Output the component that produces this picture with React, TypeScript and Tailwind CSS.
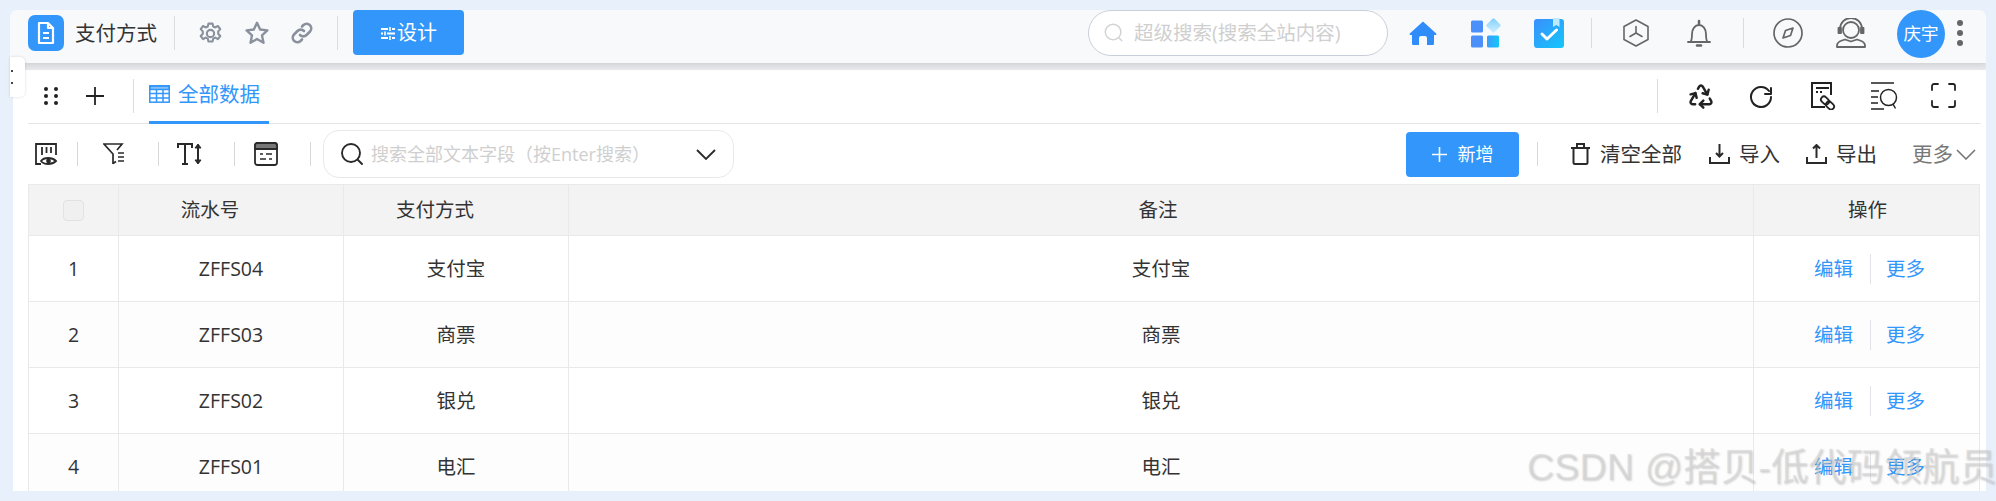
import React from "react";
import { Recycle } from "lucide-react";

const font = { fontFamily: '"Open Sans","Noto Sans CJK SC",sans-serif' };

type P = { size?: number; className?: string; children?: React.ReactNode; sw?: number; vb?: number };
function Ic({ size = 24, className = "", children, sw = 2, vb = 24 }: P) {
  return (
    <svg width={size} height={size} viewBox={`0 0 ${vb} ${vb}`} fill="none" stroke="currentColor" strokeWidth={sw} strokeLinecap="round" strokeLinejoin="round" className={`shrink-0 ${className}`}>
      {children}
    </svg>
  );
}

const VDiv = ({ h = "h-[34px]", c = "bg-[#dcdcdc]" }: { h?: string; c?: string }) => <div className={`w-px shrink-0 ${h} ${c}`} />;

function TopBar() {
  return (
    <div className="h-[53px] bg-[#f8f9fb] rounded-tl-[6px] rounded-tr-[6px] shadow-[0_2px_6px_rgba(0,0,0,0.12)] relative z-10 flex items-center">
      <div className="ml-[18px] w-9 h-9 rounded-[7px] bg-[#3296fa] flex items-center justify-center text-white -mt-[7px]">
        <svg width="20" height="24" viewBox="0 0 20 24" fill="none" stroke="currentColor" strokeWidth="2.2" strokeLinejoin="round">
          <path d="M3 2h9l5 5v15H3z" />
          <path d="M7 12h6M7 17h6" />
          <path d="M12 2v5h5" />
        </svg>
      </div>
      <div className="ml-[11px] w-[84px] text-[20.5px] text-[#333] -mt-[7px] whitespace-nowrap">支付方式</div>
      <div className="ml-[15px] -mt-[7px]"><VDiv /></div>
      <div className="ml-[23px] -mt-[7px] text-[#8a919c]">
        <Ic size={25} sw={2}>
          <path d="M10 2.5h4l.6 2.8 2 .9 2.5-1.4 2.3 3-2 2.2v2.2l2 2.2-2.3 3-2.5-1.4-2 .9-.6 2.8h-4l-.6-2.8-2-.9-2.5 1.4-2.3-3 2-2.2v-2.2l-2-2.2 2.3-3 2.5 1.4 2-.9z" />
          <circle cx="12" cy="12" r="3.5" />
        </Ic>
      </div>
      <div className="ml-[21px] -mt-[7px] text-[#8a919c]">
        <Ic size={26} sw={2.2}>
          <path d="M12 2.5l2.9 6.3 6.7.8-5 4.6 1.4 6.8-6-3.4-6 3.4 1.4-6.8-5-4.6 6.7-.8z" />
        </Ic>
      </div>
      <div className="ml-[20px] -mt-[7px] text-[#8a919c]">
        <Ic size={24} sw={2.6}>
          <path d="M10 14a4.5 4.5 0 0 0 6.5 0l3.5-3.5a4.6 4.6 0 0 0-6.5-6.5l-1.5 1.5" />
          <path d="M14 10a4.5 4.5 0 0 0-6.5 0L4 13.500a4.600 4.600 0 0 0 6.500 6.500l1.500-1.500" />
        </Ic>
      </div>
      <div className="ml-[23px] -mt-[7px]"><VDiv /></div>
      <div className="ml-[15px] w-[111px] h-[45px] -mt-[8px] rounded-[4px] bg-[#3296fa] text-white flex items-center justify-center">
        <svg width="16" height="14" viewBox="0 0 16 14" stroke="currentColor" strokeWidth="1.8" fill="none" className="mr-px">
          <path d="M1 3h7M12 3h3M1 7.500h2M7 7.500h8M1 12h7M12 12h3" />
          <path d="M10 1v4M5 5.500v4M10 10v4" strokeWidth="1.600" />
        </svg>
        <span className="text-[20px] leading-none">设计</span>
      </div>
      <div className="ml-[624px] w-[300px] h-[46px] -mt-[8px] rounded-full bg-white border border-[#c9ced8] flex items-center pl-[14px]">
        <Ic size={22} sw={1.6} className="text-[#d2d2d2]">
          <circle cx="11" cy="11" r="8.500" />
          <path d="M17.500 17.500l3 3" />
        </Ic>
        <span className="ml-[9px] text-[19.5px] text-[#cfcfcf] whitespace-nowrap">超级搜索(搜索全站内容)</span>
      </div>
      <div className="ml-[20px] -mt-[7px]">
        <svg width="30" height="30" viewBox="0 0 30 30" fill="#2f8cf8">
          <path d="M15 3.500 1.800 15.500c-.6.600-.2 1.500.6 1.500H4v8.500c0 1 .8 1.500 1.500 1.500h5.500v-7a2 2 0 0 1 2-2h4a2 2 0 0 1 2 2v7h5.500c.8 0 1.500-.5 1.500-1.500V17h1.600c.8 0 1.200-.9.600-1.500z" />
        </svg>
      </div>
      <div className="ml-[33px] -mt-[7px]">
        <svg width="30" height="30" viewBox="0 0 30 30">
          <defs>
            <linearGradient id="a1" x1="0" y1="0" x2="1" y2="1"><stop offset="0" stopColor="#7fd0fb" /><stop offset="1" stopColor="#d5f0ff" /></linearGradient>
            <linearGradient id="a2" x1="0" y1="0" x2="1" y2="0"><stop offset="0" stopColor="#3a9cfb" /><stop offset="1" stopColor="#14c6fb" /></linearGradient>
          </defs>
          <rect x="0" y="2.500" width="12" height="12" rx="1.500" fill="#4b8ffb" />
          <rect x="0" y="17.500" width="12" height="12" rx="1.500" fill="#4b8ffb" />
          <rect x="16" y="17.500" width="12" height="12" rx="1.500" fill="url(#a2)" />
          <rect x="17" y="2" width="11" height="11" rx="1.500" transform="rotate(45 22.500 7.500)" fill="url(#a1)" />
        </svg>
      </div>
      <div className="ml-[33px] -mt-[7px]">
        <svg width="30" height="30" viewBox="0 0 30 30">
          <defs>
            <linearGradient id="t1" x1="0" y1="0" x2="1" y2="1"><stop offset="0" stopColor="#3a8ffb" /><stop offset="1" stopColor="#14c6fb" /></linearGradient>
          </defs>
          <rect x="0" y="1" width="30" height="29" rx="3" fill="url(#t1)" />
          <path d="M19 0h6.500v9l-3.200-2-3.300 2z" fill="#bfe9ff" />
          <path d="M8 16l5 5 9.500-9" stroke="#fff" strokeWidth="3" fill="none" strokeLinecap="round" strokeLinejoin="round" />
        </svg>
      </div>
      <div className="ml-[27px] -mt-[7px]"><VDiv h="h-[30px]" /></div>
      <div className="ml-[29px] -mt-[7px] text-[#666]">
        <Ic size={30} sw={1.6} vb={30}>
          <path d="M15 2 27 8.500v13L15 28 3 21.500v-13z" />
          <path d="M15 8.500v6.500l-6 3.500M15 15l6 3.500" />
        </Ic>
      </div>
      <div className="ml-[33px] -mt-[7px] text-[#666]">
        <Ic size={30} sw={1.8} vb={30}>
          <path d="M4 24h22M6.500 24c1.500-2 1.500-4 1.500-8 0-5 3-9 7-9s7 4 7 9c0 4 0 6 1.500 8" />
          <path d="M15 3v3" strokeWidth="2.500" />
          <path d="M13 27.500h4" strokeWidth="2.500" />
        </Ic>
      </div>
      <div className="ml-[29px] -mt-[7px]"><VDiv h="h-[30px]" /></div>
      <div className="ml-[29px] -mt-[7px] text-[#666]">
        <Ic size={30} sw={1.7} vb={30}>
          <circle cx="15" cy="15" r="14" />
          <path d="M20 10l-7.500 2.500L10 20l7.500-2.500z" />
        </Ic>
      </div>
      <div className="ml-[33px] -mt-[7px] text-[#666]">
        <Ic size={30} sw={1.8} vb={30}>
          <circle cx="15" cy="12" r="8" />
          <path d="M4 13V11a11 11 0 0 1 22 0v2" />
          <rect x="2.500" y="10" width="2.500" height="5" fill="currentColor" />
          <rect x="25" y="10" width="2.500" height="5" fill="currentColor" />
          <path d="M1 29v-1.500c0-3 2-4 5-5l3-1 6 2 6-2 3 1c3 1 5 2 5 5V29z" />
        </Ic>
      </div>
      <div className="ml-[31px] -mt-[6px] w-12 h-[48px] rounded-full bg-[#3296fa] text-white text-[17.5px] flex items-center justify-center whitespace-nowrap">庆宇</div>
      <div className="ml-[12px] -mt-[7px] flex flex-col gap-[4px]">
        <div className="w-[6px] h-[6px] rounded-full bg-[#666]" />
        <div className="w-[6px] h-[6px] rounded-full bg-[#666]" />
        <div className="w-[6px] h-[6px] rounded-full bg-[#666]" />
      </div>
    </div>
  );
}

function TabRow() {
  return (
    <div className="h-[54px] ml-[15px] mr-[5px] border-b border-[#e5e5e5] flex items-center">
      <div className="ml-[16px] grid grid-cols-2 gap-x-[6px] gap-y-[3px] -mt-[2px]">
        {[0, 1, 2, 3, 4, 5].map((i) => (
          <div key={i} className="w-[4px] h-[4px] rounded-full bg-[#222]" />
        ))}
      </div>
      <svg width="20" height="20" viewBox="0 0 20 20" stroke="#222" strokeWidth="1.800" className="ml-[27px] -mt-[2px] shrink-0">
        <path d="M10 1v18M1 10h18" />
      </svg>
      <div className="ml-[28px] -mt-[2px]"><VDiv /></div>
      <div className="ml-[15px] h-full w-[120px] border-b-[3px] border-[#3296fa] flex items-center text-[#3296fa] -mb-px">
        <svg width="21" height="18" viewBox="0 0 21 18" fill="none" stroke="currentColor" strokeWidth="1.500" className="shrink-0 -mt-[3px]">
          <rect x="0.800" y="0.800" width="19.400" height="16.400" />
          <path d="M1 1h19v3.500H1z" fill="currentColor" fillOpacity="0.6" />
          <path d="M1 8.500h19M1 13h19M7.500 4v13M14 4v13" />
        </svg>
        <span className="ml-[8px] text-[20.5px] -mt-[3px] whitespace-nowrap">全部数据</span>
      </div>
      <div className="ml-[1388px] -mt-[2px]"><VDiv /></div>
      <div className="ml-[29px] -mt-[2px] text-[#222]">
        <Recycle size={28} strokeWidth={2.1} />
      </div>
      <div className="ml-[33px] -mt-[2px] text-[#222]">
        <Ic size={26} sw={2} vb={26}>
          <path d="M21 8A10 10 0 1 0 23 14" />
          <path d="M23 5v6h-6" />
        </Ic>
      </div>
      <div className="ml-[36px] -mt-[2px] text-[#222]">
        <svg width="26" height="28" viewBox="0 0 26 28" fill="none" stroke="currentColor" strokeWidth="2">
          <path d="M15 25H2V1h19v12" />
          <path d="M6 6h13M6 10h2M10 10h2" />
          <rect x="12" y="14" width="6" height="9" rx="3" transform="rotate(-45 15 18.500)" strokeWidth="1.800" />
          <rect x="17" y="19" width="6" height="9" rx="3" transform="rotate(-45 20 23.500)" strokeWidth="1.800" />
        </svg>
      </div>
      <div className="ml-[34px] -mt-[2px] text-[#222]">
        <svg width="28" height="28" viewBox="0 0 28 28" fill="none" stroke="currentColor" strokeWidth="1.500">
          <path d="M1 1h23M1 9h8M1 15h7M1 21h7M1 27h13" />
          <circle cx="18.500" cy="15.500" r="8" />
          <path d="M23 22l2.500 4.500" />
        </svg>
      </div>
      <div className="ml-[33px] -mt-[2px] text-[#222]">
        <Ic size={25} sw={1.8} vb={25}>
          <path d="M1 7V3a2 2 0 0 1 2-2h4M18 1h4a2 2 0 0 1 2 2v4M24 18v4a2 2 0 0 1-2 2h-4M7 24H3a2 2 0 0 1-2-2v-4" />
        </Ic>
      </div>
    </div>
  );
}

function ToolBar() {
  return (
    <div className="h-[60px] ml-[15px] flex items-center">
      <svg width="23" height="23" viewBox="0 0 23 23" fill="none" stroke="#2a2a2a" strokeWidth="1.800" className="ml-[7px] shrink-0">
        <path d="M6 21H1V1h20v11" />
        <path d="M7 4v8M11.500 4v6M16 4v6" />
        <path d="M6 18c3-4 11-4 15 0-4 4-12 4-15 0z" />
        <circle cx="13.500" cy="18" r="1.500" fill="#2a2a2a" />
      </svg>
      <div className="ml-[19px]"><VDiv h="h-6" c="bg-[#d8d8d8]" /></div>
      <svg width="21" height="22" viewBox="0 0 21 22" fill="none" stroke="#2a2a2a" strokeWidth="1.700" className="ml-[25px] shrink-0">
        <path d="M10 21V11L1 1h18l-5 6" />
        <path d="M10 20.500l3-2" />
        <path d="M15 10h6M15 14h6M15 18h6" strokeWidth="1.500" />
      </svg>
      <div className="ml-[34px]"><VDiv h="h-6" c="bg-[#d8d8d8]" /></div>
      <svg width="26" height="22" viewBox="0 0 26 22" fill="none" stroke="#2a2a2a" strokeWidth="2" className="ml-[18px] shrink-0">
        <path d="M1 5V1h14v4M8 1v20M5 21h6" />
        <path d="M21 2v18" />
        <path d="M18 5l3-4 3 4zM18 17l3 4 3-4z" fill="#2a2a2a" strokeWidth="1" />
      </svg>
      <div className="ml-[31px]"><VDiv h="h-6" c="bg-[#d8d8d8]" /></div>
      <svg width="24" height="24" viewBox="0 0 24 24" fill="none" stroke="#2a2a2a" strokeWidth="1.800" className="ml-[19px] shrink-0">
        <rect x="1" y="1" width="22" height="22" rx="2.500" />
        <path d="M1 3.500a2.500 2.500 0 0 1 2.500-2.500h17a2.500 2.500 0 0 1 2.500 2.500V7H1z" fill="#777" stroke="#2a2a2a" />
        <path d="M6 12h3M12 12h6M6 17h6M15 17h3" strokeWidth="1.600" />
      </svg>
      <div className="ml-[32px]"><VDiv h="h-6" c="bg-[#d8d8d8]" /></div>
      <div className="ml-[12px] w-[411px] h-[48px] rounded-[16px] border border-[#e8e8e8] flex items-center pl-[17px]">
        <Ic size={22} sw={1.900} vb={22} className="text-[#2a2a2a]">
          <circle cx="10" cy="10" r="9" />
          <path d="M17 17l4 4" />
        </Ic>
        <span className="ml-[8px] w-[311px] text-[18px] text-[#cfcfcf] whitespace-nowrap">搜索全部文本字段（按Enter搜索）</span>
        <svg width="20" height="11" viewBox="0 0 20 11" fill="none" stroke="#2a2a2a" strokeWidth="1.800" className="shrink-0 ml-[14px]">
          <path d="M1 1l9 9 9-9" />
        </svg>
      </div>
      <div className="ml-[672px] w-[113px] h-[45px] rounded-[4px] bg-[#3296fa] text-white flex items-center justify-center">
        <svg width="15" height="15" viewBox="0 0 15 15" stroke="currentColor" strokeWidth="1.600">
          <path d="M7.500 0v15M0 7.500h15" />
        </svg>
        <span className="ml-[11px] text-[18px] whitespace-nowrap">新增</span>
      </div>
      <div className="ml-[18px]"><VDiv h="h-6" c="bg-[#d8d8d8]" /></div>
      <svg width="21" height="22" viewBox="0 0 21 22" fill="none" stroke="#2a2a2a" strokeWidth="2" className="ml-[32px] shrink-0">
        <path d="M1 5h19M7 4V1h7v3M3.500 5v14.500a1.500 1.500 0 0 0 1.500 1.500h11a1.500 1.500 0 0 0 1.500-1.500V5" />
      </svg>
      <span className="ml-[9px] text-[20.500px] text-[#333] whitespace-nowrap">清空全部</span>
      <svg width="21" height="20" viewBox="0 0 21 20" fill="none" stroke="#2a2a2a" strokeWidth="2" className="ml-[27px] shrink-0">
        <path d="M1 13v6h19v-6" />
        <path d="M10.500 0v12M7 9l3.500 3.500L14 9" />
      </svg>
      <span className="ml-[9px] text-[20.500px] text-[#333] whitespace-nowrap">导入</span>
      <svg width="21" height="20" viewBox="0 0 21 20" fill="none" stroke="#2a2a2a" strokeWidth="2" className="ml-[26px] shrink-0">
        <path d="M1 13v6h19v-6" />
        <path d="M10.500 14V1M7 4.500 10.500 1 14 4.500" />
      </svg>
      <span className="ml-[9px] text-[20.500px] text-[#333] whitespace-nowrap">导出</span>
      <span className="ml-[35px] text-[20.500px] text-[#777] whitespace-nowrap">更多</span>
      <svg width="20" height="11" viewBox="0 0 20 11" fill="none" stroke="#777" strokeWidth="1.600" className="ml-[3px] shrink-0">
        <path d="M1 1l9 9 9-9" />
      </svg>
    </div>
  );
}

const cols = "grid grid-cols-[90px_225px_225px_1185px_227px]";
const cellB = "border-r-[1.500px] border-[#e9e9e9]";

const rows = [
  ["1", "ZFFS04", "支付宝"],
  ["2", "ZFFS03", "商票"],
  ["3", "ZFFS02", "银兑"],
  ["4", "ZFFS01", "电汇"],
];

function Table() {
  return (
    <div className="ml-[15px] mr-[6px] w-[1952px] border-l-[1.500px] border-r-[1.500px] border-[#e9e9e9] text-[#333] text-[19.500px]">
      <div className={`${cols} h-[52px] bg-[#f3f3f3] border-b-[1.500px] border-t-[1.500px] border-[#e9e9e9]`}>
        <div className={`${cellB} flex items-center justify-center`}>
          <div className="w-[21px] h-[21px] rounded-[4px] border border-[#e2e2e2] bg-[#f0f0f0]" />
        </div>
        <div className={`${cellB} flex items-center justify-center pr-[42px]`}>流水号</div>
        <div className={`${cellB} flex items-center justify-center pr-[42px]`}>支付方式</div>
        <div className={`${cellB} flex items-center justify-center pr-[6px]`}>备注</div>
        <div className="flex items-center justify-center">操作</div>
      </div>
      {rows.map(([n, code, name], i) => (
        <div key={n} className={`${cols} h-[66px] border-b-[1.500px] border-[#e9e9e9] ${i % 2 ? "bg-[#fdfdfd]" : "bg-white"}`}>
          <div className={`${cellB} flex items-center justify-center`}>{n}</div>
          <div className={`${cellB} flex items-center justify-center`}>{code}</div>
          <div className={`${cellB} flex items-center justify-center`}>{name}</div>
          <div className={`${cellB} flex items-center justify-center`}>{name}</div>
          <div className="flex items-center pl-[60px] text-[#3296fa]">
            <span className="whitespace-nowrap">编辑</span>
            <div className="ml-[17px] mr-[15px]"><VDiv h="h-[30px]" c="bg-[#e2e2e8]" /></div>
            <span className="whitespace-nowrap">更多</span>
          </div>
        </div>
      ))}
    </div>
  );
}

export default function App() {
  return (
    <div style={font} className="relative w-[1996px] h-[501px] overflow-hidden bg-[#e8f0fc] pt-[10px] px-[10px]">
      <div className="h-[481px] rounded-t-[6px] overflow-hidden flex flex-col">
        <TopBar />
        <div className="h-[7px] bg-[#e8eaee] ml-[3px] shrink-0" />
        <div className="flex-1 ml-[3px] bg-white overflow-hidden">
          <TabRow />
          <ToolBar />
          <Table />
        </div>
      </div>
      <div className="absolute z-20 left-[10px] top-[57px] w-[15px] h-[40px] bg-white rounded-r-[5px] shadow-[0_0_3px_rgba(0,0,0,0.15)] flex flex-col justify-center gap-[10px] pl-[1px]">
        <div className="w-[2px] h-[2px] bg-[#444]" />
        <div className="w-[2px] h-[2px] bg-[#444]" />
      </div>
      <div style={{ fontFamily: '"Liberation Sans","Noto Sans CJK SC",sans-serif' }} className="absolute z-30 left-[1527px] top-[444px] text-[37.500px] leading-[46px] text-[rgba(210,210,210,0.55)] whitespace-nowrap [text-shadow:1px_1px_2px_rgba(120,120,120,0.3)] tracking-[0.2px]">
        CSDN @搭贝-低代码领航员
      </div>
    </div>
  );
}
